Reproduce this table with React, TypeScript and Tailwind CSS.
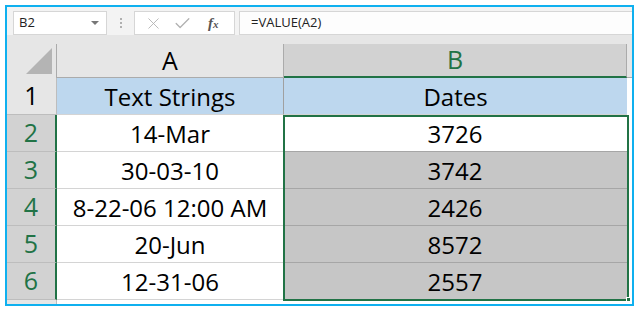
import { X, Check } from "lucide-react";

const rows = [
  { n: "2", a: "14-Mar", b: "3726" },
  { n: "3", a: "30-03-10", b: "3742" },
  { n: "4", a: "8-22-06 12:00 AM", b: "2426" },
  { n: "5", a: "20-Jun", b: "8572" },
  { n: "6", a: "12-31-06", b: "2557" },
];

const cellFont = { fontFamily: '"Open Sans", "Noto Sans", sans-serif' };

export default function App() {
  return (
    <div className="w-[641px] h-[314px] bg-white pt-[5px] pl-[5px]" style={cellFont}>
      <div className="w-[629px] h-[301px] border-2 border-[#0fb0ef] bg-[#e6e6e6] flex flex-col overflow-hidden">
        {/* formula bar */}
        <div className="h-[28px] bg-[#f3f3f3] flex items-start pt-[4px] pl-[6px] shrink-0">
          <div className="w-[94px] h-[24px] bg-white border border-[#d6d6d6] flex items-center justify-between pl-[5px] pr-[7px]">
            <span className="text-[13px] text-[#222]">B2</span>
            <span className="w-0 h-0 border-l-[4px] border-r-[4px] border-t-[4px] border-l-transparent border-r-transparent border-t-[#777]" />
          </div>
          <div className="w-[27px] h-[24px] flex flex-col items-center justify-center gap-[2px]">
            <span className="w-[2px] h-[2px] bg-[#b0b0b0]" />
            <span className="w-[2px] h-[2px] bg-[#b0b0b0]" />
            <span className="w-[2px] h-[2px] bg-[#b0b0b0]" />
          </div>
          <div className="w-[101px] h-[24px] bg-white border border-[#d6d6d6] flex items-center pl-[9px]">
            <X size={19} strokeWidth={1.1} className="text-[#b0b0b0]" />
            <Check size={19} strokeWidth={1.6} className="text-[#b0b0b0] ml-[10px]" />
            <span className="ml-[16px] text-[15px] italic font-bold text-[#555]" style={{ fontFamily: '"Liberation Serif", serif' }}>
              f<span className="text-[11px]">x</span>
            </span>
          </div>
          <div className="ml-[4px] flex-1 h-[24px] bg-[#fdfdfd] border border-r-0 border-[#d6d6d6] flex items-center pl-[11px]">
            <span className="text-[13px] text-[#222]">=VALUE(A2)</span>
          </div>
        </div>

        {/* column headers */}
        <div className="h-[43px] flex shrink-0 pt-[9px] bg-[#e6e6e6]">
          <div className="w-[50px] h-[34px] border-r border-[#ababab] relative">
            <svg className="absolute right-[4px] bottom-[4px]" width="26" height="26" viewBox="0 0 26 26">
              <polygon points="26,0 26,26 0,26" fill="#b4b4b4" />
            </svg>
          </div>
          <div className="w-[227px] h-[34px] border-b border-[#ababab] border-r flex items-center justify-center text-[25px] text-black">
            A
          </div>
          <div className="w-[343px] h-[34px] bg-[#d2d2d2] border-b-2 border-b-[#217346] border-r border-r-[#ababab] flex items-center justify-center text-[25px] text-[#217346]">
            B
          </div>
          <div className="flex-1 h-[34px] border-b border-[#ababab]" />
        </div>

        {/* body */}
        <div className="relative flex flex-col bg-white">
          <div className="h-[37px] flex">
            <div className="w-[50px] bg-[#e6e6e6] border-r border-b border-[#bdbdbd] flex items-center justify-center text-[25px] text-black">1</div>
            <div className="w-[227px] bg-[#bdd7ee] border-r border-[#a0a0a0] border-b border-b-[#d4d4d4] flex items-center justify-center pt-[2px] text-[24px] text-black">Text Strings</div>
            <div className="w-[343px] bg-[#bdd7ee] border-b border-[#d4d4d4] flex items-center justify-center pt-[2px] text-[24px] text-black">Dates</div>
            <div className="flex-1 bg-white" />
          </div>
          {rows.map((r, i) => (
            <div key={r.n} className="h-[37px] flex">
              <div className="w-[50px] bg-[#d2d2d2] border-r-2 border-r-[#217346] border-b border-b-[#bdbdbd] flex items-center justify-center text-[25px] text-[#217346]">
                {r.n}
              </div>
              <div className="w-[226px] bg-white border-b border-[#d4d4d4] flex items-center justify-center pt-[2px] text-[24px] text-black">
                {r.a}
              </div>
              <div
                className={
                  i === 0
                    ? "w-[344px] bg-white border-b border-[#a6a6a6] flex items-center justify-center pt-[2px] text-[24px] text-black"
                    : "w-[344px] bg-[#c6c6c6] border-b border-[#a6a6a6] flex items-center justify-center pt-[2px] text-[24px] text-black"
                }
              >
                {r.b}
              </div>
              <div className="flex-1 bg-white" />
            </div>
          ))}
          <div className="h-[4px] flex">
            <div className="w-[50px] bg-[#e6e6e6] border-r border-[#bdbdbd]" />
            <div className="flex-1 bg-white" />
          </div>
          {/* selection outline B2:B6 */}
          <div className="absolute left-[276px] top-[37px] w-[346px] h-[186px] border-2 border-[#217346] pointer-events-none" />
          <div className="absolute left-[619px] top-[219px] w-[5px] h-[5px] bg-[#217346] border border-white" />
        </div>
      </div>
    </div>
  );
}
